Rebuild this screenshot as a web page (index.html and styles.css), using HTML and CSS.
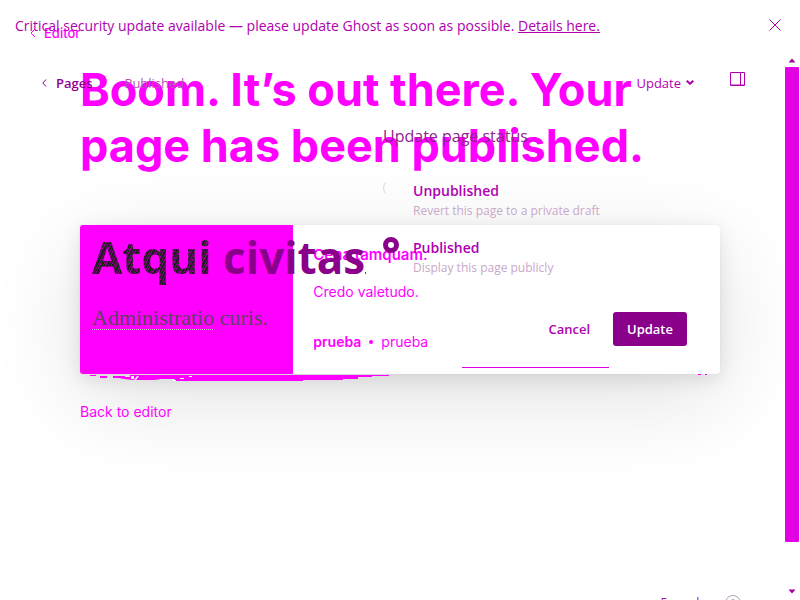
FILE: index.html
```html
<!DOCTYPE html>
<html lang="en">
<head>
<meta charset="utf-8">
<title>Ghost editor</title>
<link rel="stylesheet" href="styles.css">
</head>
<body>
<main class="stage">
  <section class="published">
    <a class="back" href="#"><svg width="6" height="10" viewBox="0 0 6 10"><path d="M5 1 1 5l4 4"/></svg>Editor</a>
    <div class="content">
      <h1>Boom. It’s out there. Your page has been published.</h1>
      <article class="card">
        <div class="cover"></div>
        <div class="summary">
          <h2>Cena tamquam.</h2>
          <p>Credo valetudo.</p>
          <footer><b>prueba</b><i class="dot"></i><span>prueba</span></footer>
        </div>
      </article>
      <svg class="smear" viewBox="0 0 640 8" preserveAspectRatio="none"><path d="M50 1H309V2H292V3H278V5H263V6H223V7H95V5H81L74 6H53L44 5 39 4H33V3H50zM10 1h6v1h-6zM20 2h7v2h-7zM33 2h12v2H33zM618 0h3v1h-3zM625 0h2v1h-2z"/><path class="gap" d="M51 2h3v3h-3zM57 2h2l-3 4h-2zM100 4h4v1h-4zM109 2h3v1h-3zM93 6h3v1h-3z"/></svg>
      <a class="return" href="#">Back to editor</a>
    </div>
  </section>

  <section class="editor">
    <div class="notice">
      <p>Critical security update available — please update Ghost as soon as possible. <a href="#">Details here.</a></p>
      <button class="icon" aria-label="Close"><svg width="12" height="12" viewBox="0 0 12 12"><path d="m.5.5 11 11m0-11-11 11"/></svg></button>
    </div>
    <div class="workspace">
      <div class="main">
        <header class="toolbar">
          <a class="pages" href="#"><svg width="5" height="8" viewBox="0 0 5 8"><path d="M4 .5.8 4 4 7.500"/></svg>Pages</a>
          <span class="state">Published</span>
          <button class="update">Update<svg width="8" height="5" viewBox="0 0 8 5"><path d="m.7.7 3.300 3L7.300.7"/></svg></button>
          <button class="icon" aria-label="Settings"><svg width="15" height="14" viewBox="0 0 15 14"><path d="M.5.5h14v13H.5zM10.500.5v13M1 13h13"/></svg></button>
        </header>
        <div class="body">
          <div class="draft">
            <div class="title"><span class="ink">Atqui</span> <span class="mid">civi</span>tas<i class="speck"></i></div>
            <p class="text"><u>Administratio</u> curis.</p>
          </div>
          <form class="dialog">
            <h3>Update page status</h3>
            <label class="option"><input type="radio" name="status"><span><strong>Unpublished</strong><small>Revert this page to a private draft</small></span></label>
            <label class="option"><input type="radio" name="status" checked><span><strong>Published</strong><small>Display this page publicly</small></span></label>
            <div class="actions"><button type="button" class="cancel">Cancel</button><button type="button" class="primary">Update</button></div>
            <hr>
          </form>
        </div>
        <div class="status"><span>5 words</span><svg width="16" height="16" viewBox="0 0 16 16"><circle cx="8" cy="8" r="7.500"/><path d="M6 6a2 2 0 1 1 3 2L8 9v1"/></svg></div>
      </div>
      <div class="scroll"><svg width="8" height="5" viewBox="0 0 8 5"><path d="M4 .5 7.500 4.500h-7z"/></svg><div class="thumb"></div><svg width="8" height="5" viewBox="0 0 8 5"><path d="M.5.5h7L4 4.500z"/></svg></div>
    </div>
  </section>
</main>
</body>
</html>
```
FILE: styles.css
```css
* { box-sizing: border-box; }
body { margin: 0; background: #fff; font-family: "Open Sans", sans-serif; color: #b000b0; overflow: hidden; }
h1, h2, h3, p { margin: 0; }
a { color: inherit; text-decoration: none; }
button { font: inherit; color: inherit; background: none; border: 0; padding: 0; }
svg { fill: none; stroke: currentColor; flex: none; display: block; }
.stage { display: grid; grid-template-columns: minmax(0, 1fr); height: 100vh; overflow: hidden; }
.published, .editor { grid-area: 1 / 1; min-height: 0; }

.published { font-family: Inter, sans-serif; color: #f0f; padding-top: 23px; }
.back { display: flex; align-items: center; gap: 8px; margin-left: 30px; font-size: 13px; font-weight: 500; line-height: 20px; width: max-content; }
.content { margin: 19px 80px 0; }
h1 { font-size: 45px; line-height: 56px; font-weight: 700; }
.card { display: flex; margin-top: 51px; height: 149px; background: #fff; border-radius: 3px; overflow: hidden; box-shadow: 0 0 1px rgba(0,0,0,.15), 0 5px 20px rgba(0,0,0,.1), 0 24px 90px rgba(0,0,0,.12); }
.cover { width: 33.33%; flex: none; background: #f0f; }
.summary { flex: 1; padding: 20px; display: flex; flex-direction: column; }
h2 { font-size: 15px; line-height: 20px; font-weight: 600; }
.summary p { font-size: 14px; line-height: 20px; margin-top: 17px; }
.summary footer { display: flex; align-items: center; gap: 8px; margin-top: auto; font-size: 14px; line-height: 24px; }
.summary b { font-weight: 600; }
.dot { width: 4px; height: 4px; border-radius: 2px; background: #f0f; }
.smear { width: 100%; height: 8px; fill: #f0f; stroke: none; }
.smear .gap { fill: #fff; }
.return { display: block; margin-top: 20px; font-size: 14px; line-height: 20px; }

.editor { position: relative; display: flex; flex-direction: column; }
.notice { display: flex; align-items: center; justify-content: space-between; height: 50px; flex: none; padding: 0 19px 0 15px; font-size: 14px; }
.notice a { text-decoration: underline; }
.workspace { display: flex; flex: 1; min-height: 0; }
.main { flex: 1; min-width: 0; display: flex; flex-direction: column; }
.toolbar { display: flex; align-items: center; height: 65px; flex: none; padding: 0 39px 0 42px; font-size: 14px; }
.pages { display: flex; align-items: center; gap: 9px; font-weight: 600; font-size: 13px; color: #90008f; }
.state { margin-left: 32px; font-size: 13px; color: #b454b4; }
.update { display: flex; align-items: center; gap: 5px; margin-left: auto; font-size: 13px; font-weight: 500; }
.update svg { stroke-width: 2; }
.toolbar .icon { margin-left: 36px; padding-bottom: 8px; }
.body { display: flex; flex: 1; min-height: 0; }
.draft { width: 291px; padding: 107px 0 0 92px; flex: none; white-space: nowrap; }
.title { font-size: 44px; line-height: 70px; font-weight: 700; color: #8b008b; }
.title .ink { color: transparent; background: repeating-linear-gradient(117deg, #1e1e1e 0 2px, #780078 2px 3px, #1e1e1e 3px 4px, #8b008b 4px 5px); background-clip: text; }
.title .mid { color: #8b008b; }
.speck { display: inline-block; width: 1px; height: 2px; background: #c0c; }
.text { font-family: "Liberation Serif", serif; font-size: 22px; line-height: 28px; margin-top: 12px; color: #604060; }
.text u { text-decoration: underline dotted 1px; text-underline-offset: 4px; text-decoration-color: #c8c8c8; }
.dialog { flex: 1; min-width: 0; margin: 0 97px 0 92px; padding-top: 8px; }
.dialog h3 { font-size: 16px; line-height: 26px; font-weight: 400; color: #8f208f; margin-bottom: 31px; }
.option { display: flex; gap: 14px; margin-bottom: 15px; }
.option input { appearance: none; width: 16px; height: 16px; margin: 0; border-radius: 50%; border: 1px solid transparent; border-left-color: #ddd; flex: none; }
.option input:checked { border: 5px solid #8b008b; }
.option strong, .option small { display: block; }
.option strong { font-size: 14px; line-height: 21px; font-weight: 600; }
.option small { font-size: 12px; line-height: 20px; font-weight: 400; color: #c9a8c9; }
.option + .option { margin-top: 16px; }
.actions { display: flex; justify-content: flex-end; align-items: center; gap: 23px; margin-top: 34px; font-size: 13px; font-weight: 600; }
.primary { width: 74px; height: 34px; border-radius: 3px; background: #8b008b; color: #fff; }
hr { width: 147px; margin: 21px 0 0 79px; border: 0; border-top: 1px solid #e000e0; }
.status { display: flex; gap: 20px; justify-content: flex-end; height: 5px; flex: none; padding-right: 43px; font-size: 12px; line-height: 16px; overflow: hidden; }
.status svg { color: #b8a0b8; }
.scroll { width: 16px; padding: 8px 0 6px; flex: none; display: flex; flex-direction: column; justify-content: space-between; align-items: center; }
.scroll svg { fill: #a000a0; stroke: none; }
.thumb { width: 14px; flex: 1; margin: 4px 0 47px; border-radius: 1px; background: #e300e3; }
```
